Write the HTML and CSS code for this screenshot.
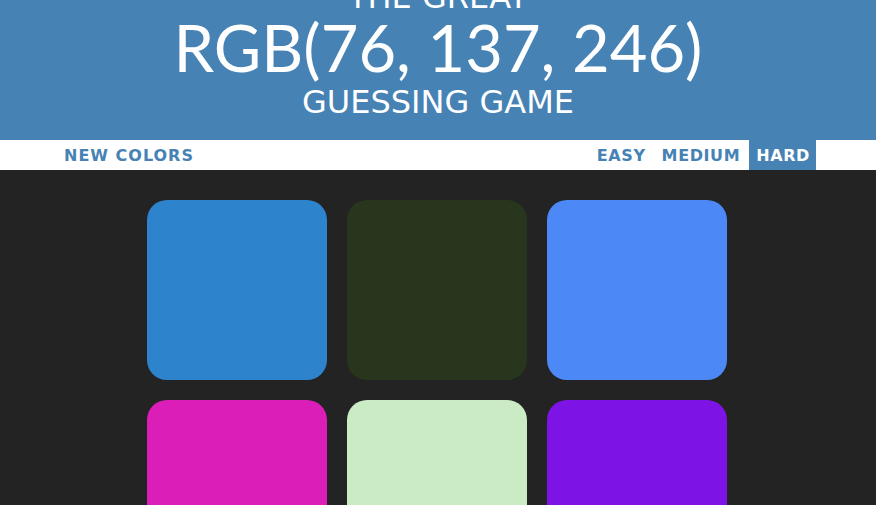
FILE: index.html
```html
<!DOCTYPE html>
<html>
<head>
<meta charset="utf-8">
<title>Color Game</title>
<link rel="stylesheet" href="styles.css">
</head>
<body>
<h1 class="title">
  <span class="title-line">The Great</span>
  <span class="title-line color-display">RGB(76, 137, 246)</span>
  <span class="title-line">Guessing Game</span>
</h1>
<div class="stripe">
  <button class="btn">New Colors</button>
  <span class="message"></span>
  <div class="modes">
    <button class="btn">Easy</button>
    <button class="btn">Medium</button>
    <button class="btn selected">Hard</button>
  </div>
</div>
<div class="container">
  <div class="square sq1"></div>
  <div class="square sq2"></div>
  <div class="square sq3"></div>
  <div class="square sq4"></div>
  <div class="square sq5"></div>
  <div class="square sq6"></div>
</div>
</body>
</html>
```
FILE: styles.css
```css
* { box-sizing: border-box; }
html, body { margin: 0; padding: 0; }
body {
  background: #232323;
  font-family: "DejaVu Sans", "Liberation Sans", sans-serif;
  overflow: hidden;
}
.title {
  margin: -40px 0 0;
  padding: 20px 0;
  height: 180px;
  background: #4682b4;
  color: #fff;
  text-align: center;
  font-weight: normal;
  text-transform: uppercase;
  font-size: 32px;
  line-height: 35px;
}
.title-line { display: block; }
.color-display {
  font-family: Lato, "DejaVu Sans", sans-serif;
  font-size: 65px;
  line-height: 70px;
  letter-spacing: 0;
  margin: -3px 0 3px;
}
.stripe {
  background: #fff;
  height: 30px;
  display: flex;
  align-items: stretch;
  padding: 0 60px 0 57px;
}
.message { flex: 1; }
.modes { display: flex; gap: 3px; }
.btn {
  border: none;
  background: none;
  margin: 0;
  padding: 0 6px 0 7px;
  height: 30px;
  font-family: inherit;
  font-weight: 700;
  font-size: 16px;
  letter-spacing: 1px;
  text-transform: uppercase;
  color: #4682b4;
}
.modes .btn { letter-spacing: 0.6px; }
.btn.selected { background: #4682b4; color: #fff; }
.container {
  width: 600px;
  margin: 30px auto 0;
  padding-left: 9px;
  display: grid;
  grid-template-columns: repeat(3, 180px);
  gap: 20px;
}
.square { width: 180px; height: 180px; border-radius: 20px; }
.sq1 { background: #2d84cc; }
.sq2 { background: #27361c; }
.sq3 { background: #4c89f6; }
.sq4 { background: #dc1eb8; }
.sq5 { background: #cbebc5; }
.sq6 { background: #7e13e6; }
```
